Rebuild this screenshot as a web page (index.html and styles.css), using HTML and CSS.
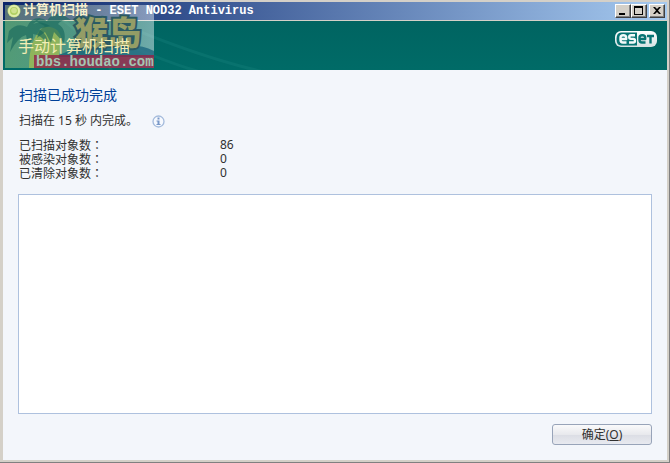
FILE: index.html
```
<!DOCTYPE html>
<html lang="zh-CN">
<head>
<meta charset="utf-8">
<title>计算机扫描 - ESET NOD32 Antivirus</title>
<link rel="stylesheet" href="styles.css">
</head>
<body>
<div class="window">
  <header class="titlebar">
    <svg class="app-icon" viewBox="0 0 14 14" aria-hidden="true">
      <circle cx="7" cy="7" r="6.5" fill="#a8c85a"/>
      <circle cx="7" cy="7" r="5" fill="#9fc241" stroke="#f3f5bb" stroke-width="2"/>
      <circle cx="7" cy="6.5" r="2.8" fill="#d5e28c"/>
    </svg>
    <h1 class="title"><span class="title-cjk">计算机扫描</span> - ESET NOD32 Antivirus</h1>
    <div class="controls">
      <button type="button" class="control" aria-label="最小化"><svg viewBox="0 0 14 12"><path d="M3 8h6v2H3z"/></svg></button>
      <button type="button" class="control" aria-label="最大化"><svg viewBox="0 0 14 12"><path fill-rule="evenodd" d="M2 1h9v9H2zM3 3v6h7V3z"/></svg></button>
      <button type="button" class="control close" aria-label="关闭"><svg viewBox="0 0 14 12"><path d="M3 2h2l2 2 2-2h2L8 5.500 11 9H9L7 7 5 9H3l3-3.500z"/></svg></button>
    </div>
  </header>
  <section class="banner">
    <svg class="rays" viewBox="0 0 340 49" aria-hidden="true">
      <path d="M100 -5Q190 35 265 52" />
      <path d="M100 13Q165 43 205 53" />
      <path d="M55 -5Q95 25 110 52" />
    </svg>
    <h2 class="banner-title">手动计算机扫描</h2>
    <svg class="logo" viewBox="0 0 42 16" role="img" aria-label="eset">
      <defs><linearGradient id="silver" x2="0" y2="1"><stop stop-color="#ffffff"/><stop offset="1" stop-color="#d6e2e3"/></linearGradient></defs>
      <rect width="42" height="16" rx="6" fill="url(#silver)"/>
      <path d="M6 1.500H22V14.500H6Q1.500 14.500 1.500 8Q1.500 1.500 6 1.500Z" fill="#087474"/>
      <g fill="none" stroke-width="2.400" stroke-linejoin="round">
        <path stroke="#f4fafa" d="M11.500 11.500H8Q5.500 11.500 5.500 9V6.500Q5.500 4.200 8.300 4.200Q11.200 4.200 11.200 6.500V8H6M20 4.200H16Q14.200 4.200 14.200 6T16 7.900H18.300Q20 7.900 20 9.700T18.300 11.500H14"/>
        <path stroke="#087474" d="M30.500 11.500H27Q24.500 11.500 24.500 9V6.500Q24.500 4.200 27.300 4.200Q30.200 4.200 30.200 6.500V8H25M32 5H39M35.500 5V12.500"/>
      </g>
    </svg>
  </section>
  <main class="content">
    <h3 class="result">扫描已成功完成</h3>
    <p class="summary">扫描在 15 秒 内完成。
      <svg class="info" viewBox="0 0 13 13" role="img" aria-label="信息">
        <circle cx="6.500" cy="6.500" r="5.500" fill="#f6f9fe" stroke="#a4bbdc" stroke-width="1.300"/>
        <path fill="#7898c8" d="M5.500 2.500h2v2h-2zM4.500 5.500h3V9h1v1h-4V9h1V6.500h-1z"/>
      </svg>
    </p>
    <dl class="stats">
      <dt>已扫描对象数<span class="colon" lang="zh-TW">：</span></dt><dd>86</dd>
      <dt>被感染对象数<span class="colon" lang="zh-TW">：</span></dt><dd>0</dd>
      <dt>已清除对象数<span class="colon" lang="zh-TW">：</span></dt><dd>0</dd>
    </dl>
    <div class="log"></div>
    <footer class="actions"><button type="button" class="ok">确定(<u>O</u>)</button></footer>
  </main>
  <svg class="watermark" viewBox="0 0 149 63" role="img" aria-label="猴岛 bbs.houdao.com">
    <defs>
      <linearGradient id="haze">
        <stop stop-color="#c4e08c" stop-opacity=".42"/>
        <stop offset=".5" stop-color="#d8ecc4" stop-opacity=".36"/>
        <stop offset="1" stop-color="#f4fbff" stop-opacity=".46"/>
      </linearGradient>
    </defs>
    <rect width="149" height="63" fill="url(#haze)"/>
    <path d="M24 63Q24 34 38 22Q56 20 57 38L54 50L48 63Z" fill="#b9c746" fill-opacity=".6"/>
    <path d="M54 50Q72 42 84 41H118Q135 39 149 46V52H54Z" fill="#0b5877" fill-opacity=".65"/>
    <g fill="#17675c" fill-opacity=".62">
      <path d="M22 22Q12 17 4 26L2 38L8 32L5 47Q13 32 21 30L23 40Q29 35 28 29Q37 30 43 40Q43 29 34 24L45 21Q36 15 28 19L36 13Q26 12 22 22Z"/>
      <path d="M42 16Q47 7 57 9L66 15Q57 14 53 19Q62 24 59 38L49 27L46 38L40 27L32 33Q34 24 40 21L30 16Q36 11 42 16Z"/>
    </g>
    <text class="mark-name" x="70" y="40">猴岛</text>
    <rect x="29" y="50" width="120" height="13" fill="#912347" fill-opacity=".82"/>
    <text class="mark-url" x="31" y="61">bbs.houdao.com</text>
  </svg>
</div>
</body>
</html>
```
FILE: styles.css
```
* { box-sizing: border-box; }

body {
  margin: 0;
  font-family: "Noto Sans", "Noto Sans CJK SC", sans-serif;
  font-size: 12px;
  color: #303030;
}

h1, h2, h3, p, dl, dd { margin: 0; font-weight: 400; }

.window {
  position: relative;
  display: flex;
  flex-direction: column;
  min-height: 100vh;
  padding-left: 1px;
  border: solid #d4d0c8;
  border-width: 2px 3px 3px 2px;
  box-shadow: inset 1px 0 #d4d0c8;
}

.window::after {
  content: "";
  position: absolute;
  inset: -2px -3px -3px -2px;
  border: solid #808080;
  border-width: 0 1px 1px 0;
  pointer-events: none;
}

.titlebar {
  display: flex;
  align-items: center;
  height: 19px;
  padding: 0 2px 0 4px;
  border-bottom: 1px solid #d4d0c8;
  background: linear-gradient(90deg, #0a246a, #a6caf0);
}

.app-icon { width: 14px; height: 14px; margin-right: 2px; }

.title {
  position: relative;
  z-index: 2;
  flex: 1;
  font: bold 12px/18px "Liberation Mono", "Noto Sans CJK SC", monospace;
  color: #fff;
  white-space: nowrap;
}

.title-cjk { font-size: 13px; color: #f6efcd; }

.controls { display: flex; }

.control {
  width: 16px;
  height: 14px;
  padding: 0;
  border: 1px solid;
  border-color: #fff #404040 #404040 #fff;
  background: #d4d0c8;
  box-shadow: inset -1px -1px #808080;
}

.control svg { display: block; width: 14px; height: 12px; }

.close { margin-left: 2px; }

.banner {
  position: relative;
  display: flex;
  justify-content: space-between;
  height: 49px;
  padding: 10px 10px 0 15px;
  background: linear-gradient(#006461, #006b67);
}

.rays {
  position: absolute;
  left: 0;
  top: 0;
  width: 340px;
  height: 49px;
  fill: none;
  stroke: #15807a;
  stroke-opacity: .4;
  stroke-width: 3px;
}

.banner-title {
  position: relative;
  z-index: 2;
  font-size: 16px;
  line-height: 30px;
  color: #f3edb4;
}

.logo { width: 42px; height: 16px; }

.content {
  flex: 1;
  display: flex;
  flex-direction: column;
  padding: 15px 15px;
  background: #f3f6fb;
}

.result {
  padding-left: 1px;
  font-size: 14px;
  line-height: 20px;
  color: #004098;
}

.summary {
  display: flex;
  align-items: center;
  gap: 14px;
  margin-top: 7px;
  padding-left: 1px;
  line-height: 18px;
}

.info { width: 13px; height: 13px; }

.stats {
  display: grid;
  grid-template-columns: 201px 1fr;
  grid-auto-rows: 14px;
  margin-top: 8px;
  padding-left: 1px;
  line-height: 14px;
}

.colon { font-family: "Noto Sans CJK TC", sans-serif; }

.log {
  flex: 1;
  margin-top: 14px;
  border: 1px solid #aec1de;
  background: #fff;
}

.actions {
  display: flex;
  justify-content: flex-end;
  margin-top: 10px;
}

.ok {
  width: 100px;
  height: 21px;
  padding: 0;
  border: 1px solid #98a4b9;
  border-radius: 3px;
  background: linear-gradient(#fafafb, #e8e9ed 50%, #dcdee5 55%, #e8eaf0);
  font: inherit;
  line-height: 18px;
  color: #303030;
}

.watermark {
  position: absolute;
  z-index: 1;
  left: 3px;
  top: 3px;
  width: 149px;
  height: 63px;
  pointer-events: none;
}

.mark-name {
  font: 900 33px "Noto Sans CJK SC", sans-serif;
  fill: #949d66;
  stroke: #2b5a63;
  stroke-width: 4px;
  paint-order: stroke;
}

.mark-url {
  font: bold 14px "Liberation Mono", monospace;
  fill: #a5c5b2;
}
```
